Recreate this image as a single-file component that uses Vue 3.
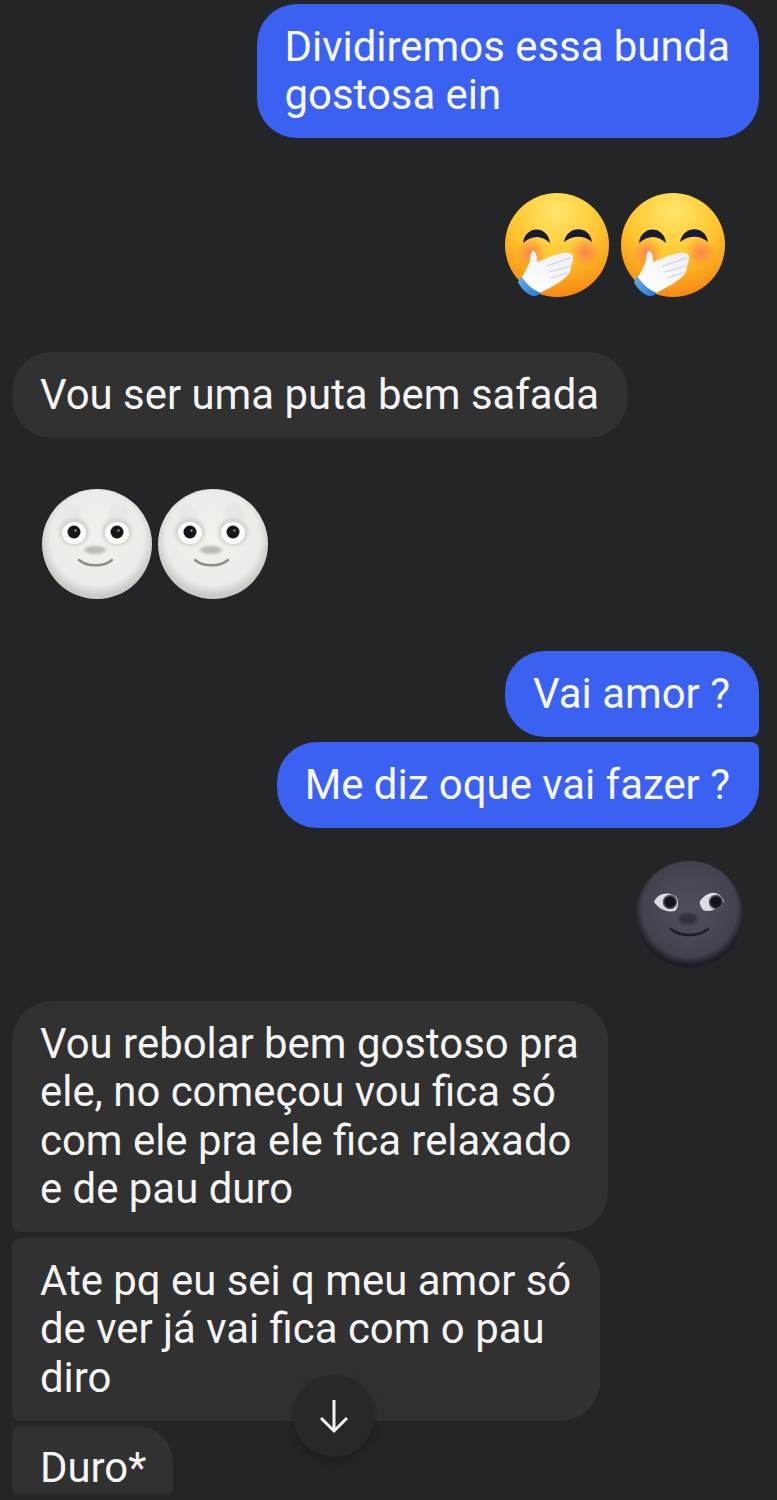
<script setup>
const items = [
  { id: 1, kind: 'text', from: 'me', shape: 'solo', gap: 4, lines: ['Dividiremos essa bunda', 'gostosa ein'] },
  { id: 2, kind: 'emoji', from: 'me', gap: 55, icon: 'blush', size: 104, spacing: 12, count: 2, inset: 34 },
  { id: 3, kind: 'text', from: 'them', shape: 'solo', gap: 55, lines: ['Vou ser uma puta bem safada'] },
  { id: 4, kind: 'emoji', from: 'them', gap: 51.5, icon: 'moon', size: 110, spacing: 6, count: 2, inset: 30 },
  { id: 5, kind: 'text', from: 'me', shape: 'first', gap: 52, lines: ['Vai amor ?'] },
  { id: 6, kind: 'text', from: 'me', shape: 'last', gap: 5.5, lines: ['Me diz oque vai fazer ?'] },
  { id: 7, kind: 'emoji', from: 'me', gap: 33.5, icon: 'dark', size: 107, spacing: 0, count: 1, inset: 16 },
  { id: 8, kind: 'text', from: 'them', shape: 'first', gap: 33, lines: ['Vou rebolar bem gostoso pra', 'ele, no começou vou fica só', 'com ele pra ele fica relaxado', 'e de pau duro'] },
  { id: 9, kind: 'text', from: 'them', shape: 'middle', gap: 6, lines: ['Ate pq eu sei q meu amor só', 'de ver já vai fica com o pau', 'diro'] },
  { id: 10, kind: 'text', from: 'them', shape: 'cut', gap: 5.5, lines: ['Duro*'] }
]
</script>

<template>
  <main class="chat">
    <svg class="defs" width="0" height="0" aria-hidden="true">
      <defs>
        <radialGradient id="faceFill" cx="50%" cy="18%" r="88%">
          <stop offset="0" stop-color="#ffe66b" />
          <stop offset="0.5" stop-color="#ffc62e" />
          <stop offset="1" stop-color="#f57f0e" />
        </radialGradient>
        <radialGradient id="blushFill">
          <stop offset="0" stop-color="#fa7c50" stop-opacity="0.9" />
          <stop offset="1" stop-color="#fa7c50" stop-opacity="0" />
        </radialGradient>
        <linearGradient id="handFill" x1="0.8" y1="0" x2="0.2" y2="1">
          <stop offset="0" stop-color="#eef0f6" />
          <stop offset="1" stop-color="#ffffff" />
        </linearGradient>
        <linearGradient id="cuffFill" x1="0" y1="0" x2="1" y2="1">
          <stop offset="0" stop-color="#6bb0ee" />
          <stop offset="1" stop-color="#1f78d6" />
        </linearGradient>
        <radialGradient id="moonFill" cx="50%" cy="45%" r="52%">
          <stop offset="0" stop-color="#f3f2ee" />
          <stop offset="0.82" stop-color="#ecebe7" />
          <stop offset="1" stop-color="#cbcac6" />
        </radialGradient>
        <radialGradient id="darkFill" cx="50%" cy="45%" r="52%">
          <stop offset="0" stop-color="#50505c" />
          <stop offset="0.85" stop-color="#43434f" />
          <stop offset="1" stop-color="#1d1d23" />
        </radialGradient>
        <filter id="soft" x="-30%" y="-30%" width="160%" height="160%">
          <feGaussianBlur stdDeviation="1.6" />
        </filter>
      </defs>

      <symbol id="blush" viewBox="0 0 104 104">
        <circle cx="52" cy="52" r="52" fill="url(#faceFill)" />
        <circle cx="26" cy="60" r="15" fill="url(#blushFill)" />
        <circle cx="80" cy="59" r="15" fill="url(#blushFill)" />
        <path d="M18 50 C20 32 43 32 45 50 C37 42 27 42 18 50 Z" fill="#171a38" />
        <path d="M59 49 C62 32 85 32 87 49 C79 42 68 42 59 49 Z" fill="#171a38" />
        <path d="M17 84 C20 79 23 74 25 68 C25 63 26 58 28 58 C31 58 32 63 32 69 C40 66 50 61 58 60 C64 59 69 61 68 65 C68 68 67 71 66 73 C66 77 65 80 62 83 C56 89 45 95 35 100 C28 97 21 91 17 84 Z" fill="url(#handFill)" />
        <path d="M42 73 L65 65 M44 79 L65 73 M46 85 L62 80" fill="none" stroke="#c9d0df" stroke-width="1.2" stroke-linecap="round" />
        <path d="M16 83 C21 91 28 97 36 100 C33 103 29 104 25 102 C20 99 15 94 13 89 Z" fill="url(#cuffFill)" />
      </symbol>

      <symbol id="moon" viewBox="0 0 110 110">
        <circle cx="55" cy="55" r="55" fill="url(#moonFill)" />
        <circle cx="76" cy="24" r="10" fill="#dddcd8" opacity="0.35" filter="url(#soft)" />
        <circle cx="30" cy="26" r="10" fill="#dddcd8" opacity="0.25" filter="url(#soft)" />
        <ellipse cx="32" cy="43" rx="15" ry="14" fill="#d6d5d0" filter="url(#soft)" />
        <ellipse cx="75" cy="43" rx="15" ry="14" fill="#d6d5d0" filter="url(#soft)" />
        <ellipse cx="32" cy="44" rx="12" ry="11" fill="#fbfbf9" />
        <ellipse cx="75" cy="44" rx="12" ry="11" fill="#fbfbf9" />
        <circle cx="32" cy="43" r="6.5" fill="#17171b" />
        <circle cx="75" cy="43" r="6.5" fill="#17171b" />
        <circle cx="33.5" cy="41.5" r="1.2" fill="#8c8c90" />
        <circle cx="76.5" cy="41.5" r="1.2" fill="#8c8c90" />
        <ellipse cx="53" cy="61" rx="11" ry="4" fill="#bab9b4" filter="url(#soft)" />
        <path d="M37 71 C45 78 62 78 70 71" fill="none" stroke="#8d8c87" stroke-width="2.4" stroke-linecap="round" />
      </symbol>

      <symbol id="dark" viewBox="0 0 107 107">
        <circle cx="53.5" cy="53.5" r="53.5" fill="url(#darkFill)" />
        <path d="M18 41 C22 31 35 30 41 37 C43 42 42 47 39 50 C30 52 22 47 18 41 Z" fill="#dcdce4" />
        <path d="M64 40 C72 29 83 29 88 40 C84 47 74 52 67 49 C65 46 63 43 64 40 Z" fill="#dcdce4" />
        <circle cx="34" cy="41" r="6.5" fill="#141418" stroke="#55555e" stroke-width="1.5" />
        <circle cx="80" cy="41" r="6.5" fill="#141418" stroke="#55555e" stroke-width="1.5" />
        <ellipse cx="52" cy="58" rx="10" ry="6" fill="#33333d" filter="url(#soft)" />
        <path d="M35 68 C44 76 62 76 72 68" fill="none" stroke="#1e1e25" stroke-width="2.5" stroke-linecap="round" />
      </symbol>
    </svg>

    <template v-for="item in items" :key="item.id">
      <div
        v-if="item.kind === 'text'"
        class="bubble"
        :class="[item.from, item.shape]"
        :style="{ marginTop: item.gap + 'px' }"
      >
        <div v-for="line in item.lines" :key="line" class="line">{{ line }}</div>
      </div>
      <div
        v-else
        class="emoji-row"
        :class="item.from"
        :style="{ marginTop: item.gap + 'px', gap: item.spacing + 'px', paddingInline: item.inset + 'px' }"
      >
        <svg
          v-for="n in item.count"
          :key="n"
          :width="item.size"
          :height="item.size"
          aria-hidden="true"
        >
          <use :href="'#' + item.icon" />
        </svg>
      </div>
    </template>

    <button class="scroll-down" type="button" aria-label="Ir para o fim">
      <svg width="32" height="36" viewBox="0 0 32 36" fill="none" stroke="#f2f2f2" stroke-width="3">
        <path d="M16 2 V33" />
        <path d="M3 20 L16 33 L29 20" />
      </svg>
    </button>
  </main>
</template>

<style scoped>
.chat {
  position: relative;
  display: flex;
  flex-direction: column;
  box-sizing: border-box;
  height: 1500px;
  padding: 0 18px 0 12px;
  overflow: hidden;
  background: #232527;
  font-family: Roboto, sans-serif;
  font-size: 41.9px;
  color: #f4f4f4;
}

.defs {
  position: absolute;
}

.bubble {
  box-sizing: border-box;
  padding: 18.5px 29px 18.5px 28px;
  border-radius: 40px;
}

.line {
  height: 48.5px;
  line-height: 48.5px;
  white-space: nowrap;
}

.bubble.me {
  align-self: flex-end;
  background: #3b61f3;
  color: #f7f8ff;
}

.bubble.them {
  align-self: flex-start;
  background: #313131;
}

.me.first {
  border-bottom-right-radius: 8px;
}

.me.last {
  border-top-right-radius: 8px;
}

.them.first {
  border-bottom-left-radius: 8px;
}

.them.middle {
  border-top-left-radius: 8px;
  border-bottom-left-radius: 8px;
}

.them.cut {
  height: 68px;
  padding-top: 18px;
  padding-right: 27px;
  padding-bottom: 0;
  border-radius: 8px 36px 6px 6px;
}

.emoji-row {
  display: flex;
}

.emoji-row.me {
  justify-content: flex-end;
}

.scroll-down {
  position: absolute;
  left: 293px;
  top: 1375px;
  display: flex;
  align-items: center;
  justify-content: center;
  width: 82px;
  height: 82px;
  padding: 0;
  border: 0;
  border-radius: 50%;
  background: #26282a;
  box-shadow: 0 3px 10px rgba(0, 0, 0, 0.25);
}
</style>

<style>
body {
  background: #232527;
}
</style>
